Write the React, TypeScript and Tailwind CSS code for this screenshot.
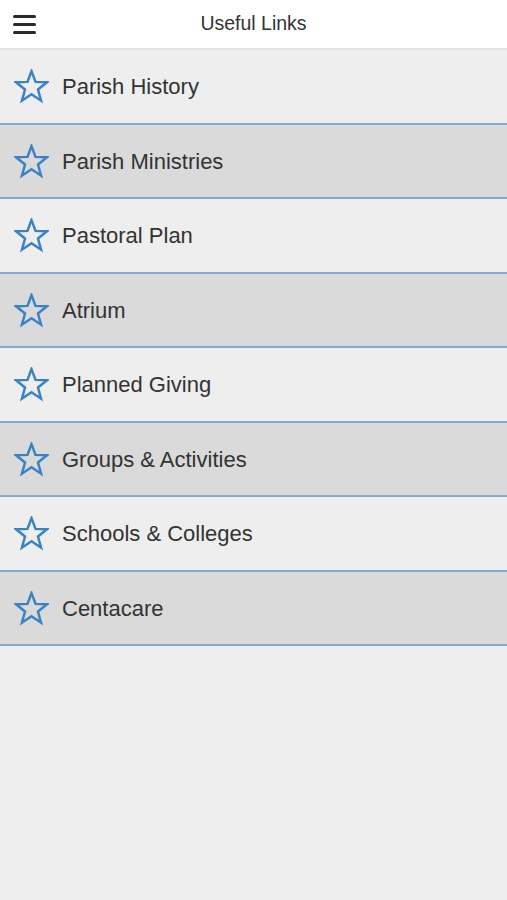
const links = [
  'Parish History',
  'Parish Ministries',
  'Pastoral Plan',
  'Atrium',
  'Planned Giving',
  'Groups & Activities',
  'Schools & Colleges',
  'Centacare',
];

// outline star, sharp points
const StarIcon = () => (
  <svg width="35" height="35" viewBox="0 0 34 34" className="shrink-0">
    <polygon
      points="17,2 20.9,12.5 32,12.9 23.3,19.9 26.3,30.8 17,24.6 7.7,30.8 10.7,19.9 2,12.9 13.1,12.5"
      fill="none"
      stroke="#3a82c6"
      strokeWidth="2.4"
      strokeLinejoin="miter"
    />
  </svg>
);

const App = () => {
  return (
    <div className="min-h-[900px] bg-[#eeeeee] font-['Liberation_Sans',Arial,sans-serif]">
      {/* Header */}
      <div className="relative flex h-[50px] items-center justify-center border-b-2 border-[#e4e4e4] bg-white">
        <button className="absolute left-[13px] top-[15px] flex w-[23px] flex-col gap-[5px]">
          <span className="block h-[3px] w-full rounded-sm bg-[#2a2a2a]" />
          <span className="block h-[3px] w-full rounded-sm bg-[#2a2a2a]" />
          <span className="block h-[3px] w-full rounded-sm bg-[#2a2a2a]" />
        </button>
        <h1 className="text-[19.5px] text-[#333333]">Useful Links</h1>
      </div>

      {/* Link list */}
      <div>
        {links.map((label, i) => (
          <div
            key={label}
            className={
              i % 2 === 0
                ? 'flex h-[75px] items-center gap-[13px] border-b-2 border-[#86a9ce] bg-[#eeeeee] pl-[14px]'
                : 'flex h-[74px] items-center gap-[13px] border-b-2 border-[#86a9ce] bg-[#dadada] pl-[14px]'
            }
          >
            <StarIcon />
            <span className="text-[22px] text-[#333333]">{label}</span>
          </div>
        ))}
      </div>
    </div>
  );
};

export default App;
